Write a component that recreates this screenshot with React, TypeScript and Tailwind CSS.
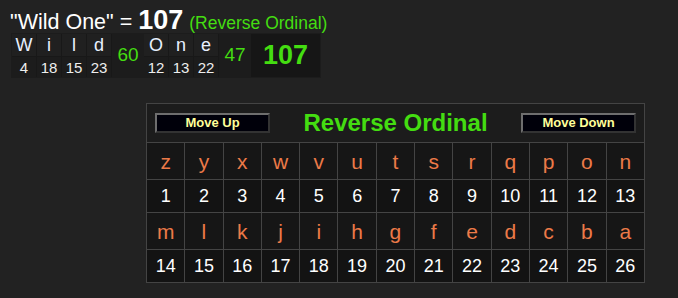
const green = 'text-[#44dd11]';

const word = [
  { letters: ['W', 'i', 'l', 'd'], values: [4, 18, 15, 23], sum: 60 },
  { letters: ['O', 'n', 'e'], values: [12, 13, 22], sum: 47 },
];

const rows = [
  ['z', 'y', 'x', 'w', 'v', 'u', 't', 's', 'r', 'q', 'p', 'o', 'n'],
  ['m', 'l', 'k', 'j', 'i', 'h', 'g', 'f', 'e', 'd', 'c', 'b', 'a'],
];

function MoveButton({ label }: { label: string }) {
  return (
    <button className="w-[115px] h-[20px] bg-[#00000a] border-2 border-t-[#6e6e6e] border-l-[#6e6e6e] border-b-[#333] border-r-[#333] text-[#ffff99] text-[13px] font-bold leading-none">
      {label}
    </button>
  );
}

export default function App() {
  return (
    <div className="w-[678px] h-[298px] bg-[#222222] font-['Liberation_Sans',Arial,sans-serif] overflow-hidden">
      <div className="pl-[10px] h-[33px] flex items-baseline whitespace-nowrap">
        <span className="text-white text-[21.5px]">"Wild One" = </span>
        <span className="text-white text-[27px] font-bold ml-[6px]">107</span>
        <span className={`${green} text-[17.5px] ml-[6px]`}>(Reverse Ordinal)</span>
      </div>

      {/* word breakdown */}
      <div className="ml-[11px] flex w-fit bg-[#171717] border border-[#1c1c1c]">
        {word.map((w, wi) => (
          <div key={wi} className="flex">
            {w.letters.map((l, i) => (
              <div key={i} className="flex flex-col w-[25px] border-r border-[#181818]">
                <div className="h-[22px] bg-[#202020] flex items-center justify-center text-[#e8f0ff] text-[18px] leading-none">{l}</div>
                <div className="h-[21px] bg-[#1c1c1c] flex items-center justify-center text-[#eee] text-[15px] leading-none border-t border-[#181818]">{w.values[i]}</div>
              </div>
            ))}
            <div className={`w-[32px] flex items-center justify-center ${green} text-[19px] bg-[#1c1c1c]`}>{w.sum}</div>
          </div>
        ))}
        <div className={`w-[69px] flex items-center justify-center ${green} text-[27px] font-bold bg-[#161616]`}>107</div>
      </div>

      {/* cipher chart */}
      <table className="ml-[146px] mt-[25px] w-[499px] table-fixed border-collapse border border-[#444]">
        <tbody>
          <tr className="h-[39px] bg-[#1c1c1c]">
            <td colSpan={13} className="border border-[#444] px-[8px]">
              <div className="flex items-center justify-between pb-[1px]">
                <MoveButton label="Move Up" />
                <span className={`${green} text-[24px] font-bold`}>Reverse Ordinal</span>
                <MoveButton label="Move Down" />
              </div>
            </td>
          </tr>
          {rows.map((r, ri) => (
            <>
              <tr key={`l${ri}`} className="h-[37px] bg-[#161616]">
                {r.map((c) => (
                  <td key={c} className="border border-[#444] text-center text-[#ec7a48] text-[21px] leading-none">{c}</td>
                ))}
              </tr>
              <tr key={`n${ri}`} className="h-[33px] bg-[#131313]">
                {r.map((_, i) => (
                  <td key={i} className="border border-[#444] text-center text-white text-[18px] leading-none">{ri * 13 + i + 1}</td>
                ))}
              </tr>
            </>
          ))}
        </tbody>
      </table>
    </div>
  );
}
